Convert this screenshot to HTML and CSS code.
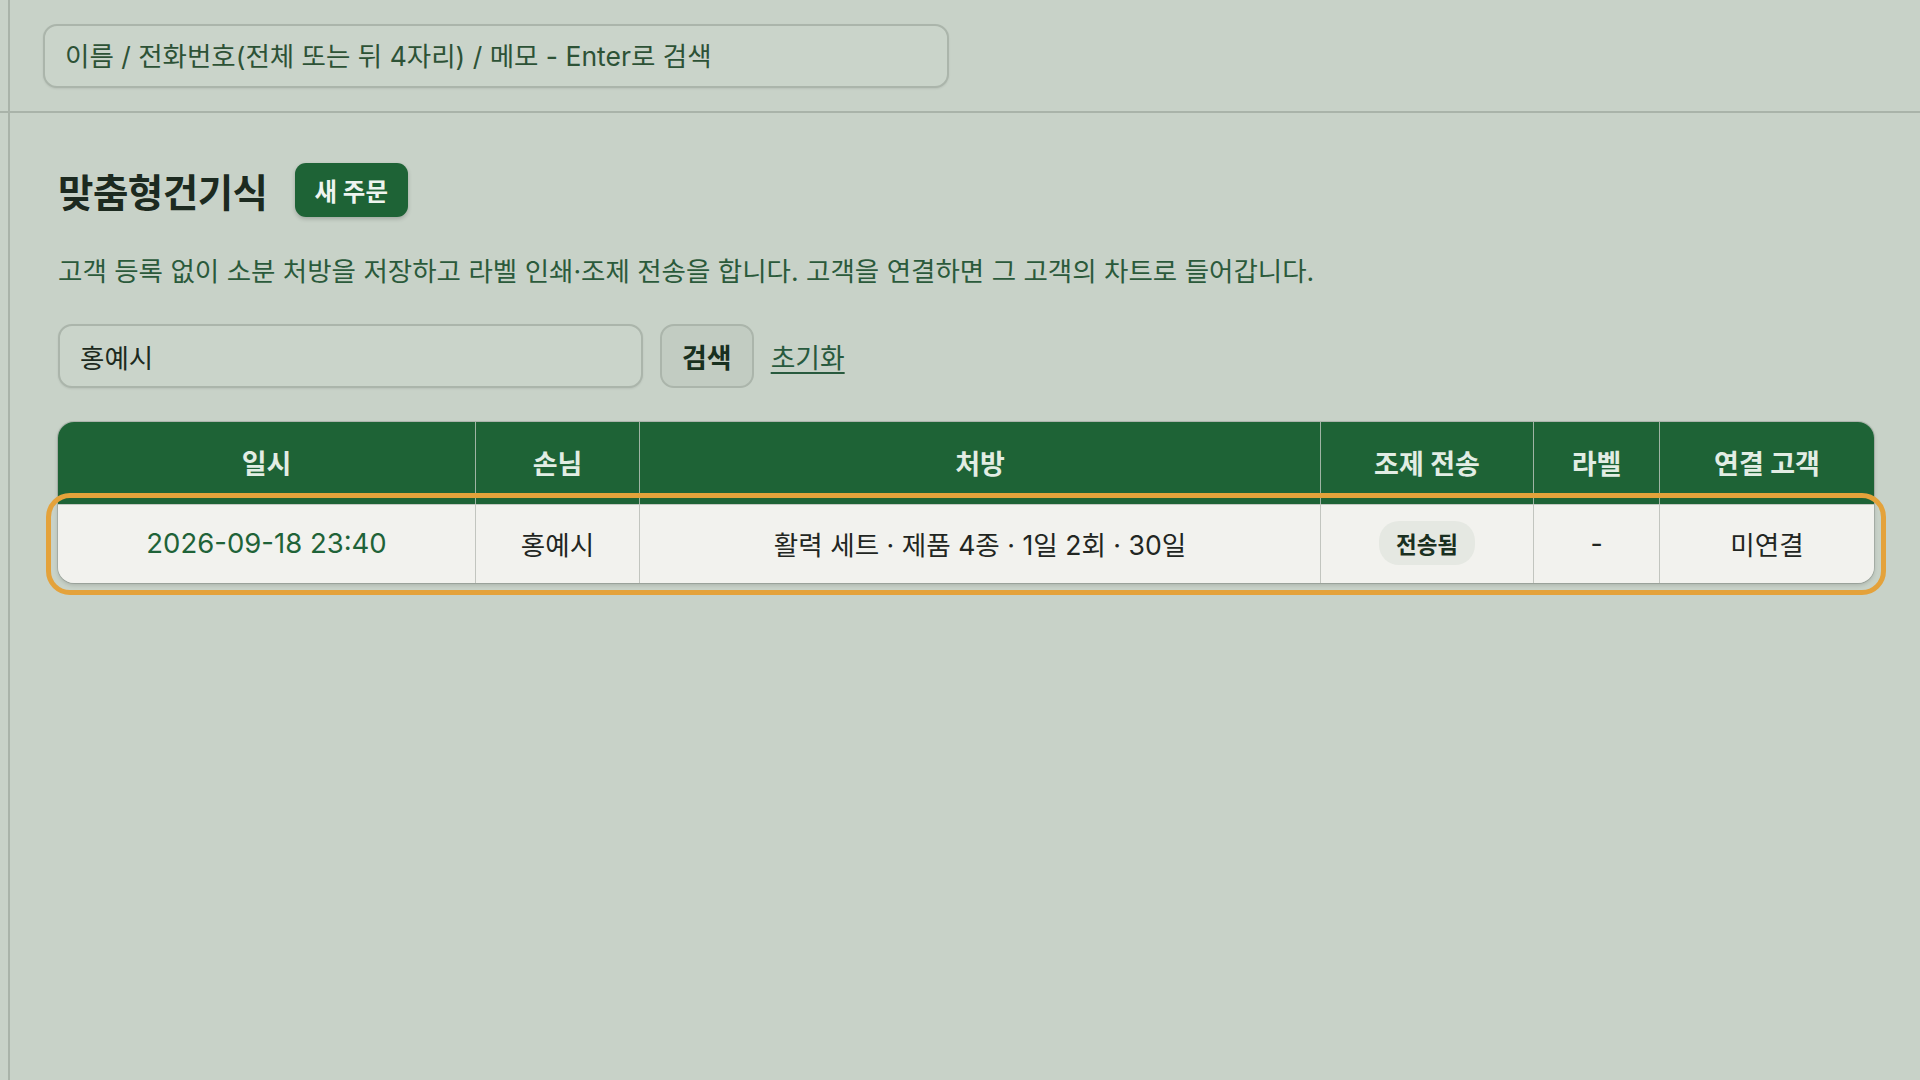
FILE: index.html
```html
<!DOCTYPE html>
<html lang="ko">
<head>
<meta charset="utf-8">
<title>맞춤형건기식</title>
<link rel="stylesheet" href="styles.css">
</head>
<body>
<div class="app">
  <aside class="rail"><div class="rail-top"></div></aside>
  <div class="main">
    <header class="topbar">
      <input class="global-search" type="text" placeholder="이름 / 전화번호(전체 또는 뒤 4자리) / 메모 - Enter로 검색">
    </header>
    <section class="content">
      <div class="title-row">
        <h1 class="title">맞춤형건기식</h1>
        <button class="btn-primary" type="button">새 주문</button>
      </div>
      <p class="desc">고객 등록 없이 소분 처방을 저장하고 라벨 인쇄·조제 전송을 합니다. 고객을 연결하면 그 고객의 차트로 들어갑니다.</p>
      <form class="search-row">
        <input class="search-input" type="text" value="홍예시">
        <button class="btn-search" type="button">검색</button>
        <a class="reset-link" href="#">초기화</a>
      </form>
      <div class="tbl">
        <div class="thead">
          <div class="th">일시</div>
          <div class="th">손님</div>
          <div class="th">처방</div>
          <div class="th">조제 전송</div>
          <div class="th">라벨</div>
          <div class="th">연결 고객</div>
        </div>
        <div class="trow">
          <div class="td date">2026-09-18 23:40</div>
          <div class="td">홍예시</div>
          <div class="td">활력 세트 · 제품 4종 · 1일 2회 · 30일</div>
          <div class="td"><span class="badge">전송됨</span></div>
          <div class="td">-</div>
          <div class="td">미연결</div>
        </div>
      </div>
    </section>
  </div>
</div>
</body>
</html>
```
FILE: styles.css
```css
* { box-sizing: border-box; }

html, body {
  margin: 0;
  padding: 0;
  height: 100%;
}

body {
  background: #c8d2c8;
  font-family: Inter, "Noto Sans CJK KR", sans-serif;
  color: #1d2a20;
}

.app {
  display: flex;
  min-height: 100vh;
}

.rail {
  width: 10px;
  flex: 0 0 10px;
  border-right: 2px solid #a9b3a9;
}

.rail-top {
  height: 113px;
  border-bottom: 2px solid #a9b3a9;
}

.main {
  flex: 1;
  display: flex;
  flex-direction: column;
}

.topbar {
  height: 113px;
  border-bottom: 2px solid #a9b3a9;
  padding: 24px 0 0 33px;
}

.global-search {
  width: 906px;
  height: 64px;
  border: 2px solid #abb5ab;
  border-radius: 14px;
  background: #cad4ca;
  padding: 0 20px;
  font-family: inherit;
  font-size: 26.5px;
  color: #2c4f35;
  box-shadow: 0 1px 2px rgba(0,0,0,0.08);
  outline: none;
}

.global-search::placeholder {
  color: #2d5236;
  opacity: 1;
}

.content {
  padding: 50px 46px 0 48px;
  display: flex;
  flex-direction: column;
}

.title-row {
  display: flex;
  align-items: center;
  gap: 27px;
  height: 54px;
}

.title {
  margin: 0;
  font-size: 38.5px;
  font-weight: 700;
  color: #1c2a20;
  letter-spacing: -0.5px;
}

.btn-primary {
  height: 54px;
  padding: 0 20px;
  border: none;
  border-radius: 11px;
  background: #1e6336;
  color: #eef4ef;
  font-family: inherit;
  font-size: 24.5px;
  font-weight: 700;
  box-shadow: 0 2px 4px rgba(0,0,0,0.2);
}

.desc {
  margin: 36px 0 0;
  font-size: 26.5px;
  line-height: 36px;
  color: #2b5a3b;
}

.search-row {
  margin: 35px 0 0;
  display: flex;
  align-items: center;
  gap: 17px;
}

.search-input {
  width: 585px;
  height: 64px;
  border: 2px solid #abb5ab;
  border-radius: 14px;
  background: #cad4ca;
  padding: 0 20px;
  font-family: inherit;
  font-size: 26.5px;
  color: #1d2a20;
  box-shadow: 0 1px 2px rgba(0,0,0,0.08);
  outline: none;
}

.btn-search {
  height: 64px;
  padding: 0 20px;
  border: 2px solid #abb5ab;
  border-radius: 14px;
  background: #c2ccc2;
  font-family: inherit;
  font-size: 27px;
  font-weight: 700;
  color: #18301f;
}

.reset-link {
  font-size: 26.8px;
  color: #285a3e;
  text-decoration: underline;
  text-underline-offset: 4px;
}

.tbl {
  margin-top: 34px;
  border-radius: 16px;
  box-shadow: 0 0 0 1px rgba(0,0,0,0.12), 0 2px 4px rgba(0,0,0,0.16);
  display: flex;
  flex-direction: column;
}

.thead,
.trow {
  display: grid;
  grid-template-columns: 417px 164px 681px 213px 126px 1fr;
}

.thead {
  height: 82px;
  background: #1e6336;
  border-radius: 16px 16px 0 0;
}

.th {
  display: flex;
  align-items: center;
  justify-content: center;
  padding-bottom: 2px;
  font-size: 27px;
  font-weight: 700;
  color: #e2ede4;
  border-left: 1px solid #9fb4a4;
}

.th:first-child { border-left: none; }

.trow {
  position: relative;
  height: 79px;
  background: #f2f2ee;
  border-top: 1px solid #c4c8c1;
  border-radius: 0 0 16px 16px;
}

.trow::after {
  content: "";
  position: absolute;
  top: -12px;
  left: -12px;
  right: -12px;
  bottom: -12px;
  border: 5px solid #e4a23b;
  border-radius: 24px;
  pointer-events: none;
}

.td {
  display: flex;
  align-items: center;
  justify-content: center;
  padding-bottom: 2px;
  font-size: 26.6px;
  color: #222622;
  border-left: 1px solid #c2c5bf;
}

.td:first-child { border-left: none; }

.td.date {
  color: #1f6338;
  font-size: 27.5px;
}

.badge {
  display: inline-block;
  padding: 6px 17px;
  border-radius: 20px;
  background: #e5e8e2;
  font-size: 22.5px;
  font-weight: 700;
  color: #1a3021;
}
```
